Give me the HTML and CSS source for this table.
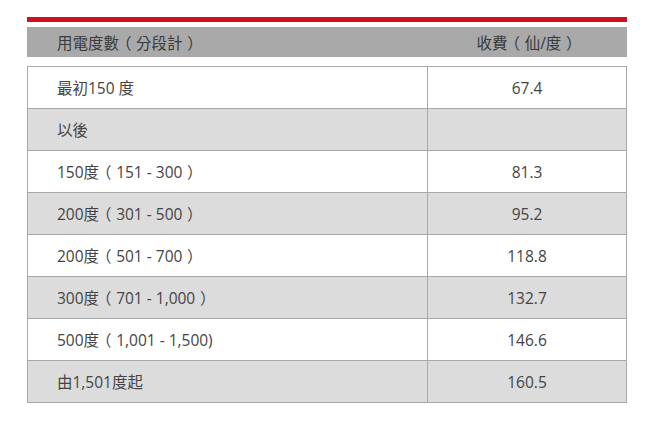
FILE: index.html
```html
<!DOCTYPE html>
<html lang="zh-Hant">
<head>
<meta charset="utf-8">
<title>電費</title>
<link rel="stylesheet" href="styles.css">
</head>
<body>
<div class="tariff">
  <div class="rule"></div>
  <div class="head">
    <div class="head-a">用電度數<span class="pn">（</span>分段計<span class="pn">）</span></div>
    <div class="head-b">收費<span class="pn">（</span>仙/度<span class="pn">）</span></div>
  </div>
  <table class="rates">
    <tr><td class="c-a">最初150 度</td><td class="c-b">67.4</td></tr>
    <tr class="alt"><td class="c-a">以後</td><td class="c-b"></td></tr>
    <tr><td class="c-a">150度<span class="pn">（</span>151 - 300<span class="pn">）</span></td><td class="c-b">81.3</td></tr>
    <tr class="alt"><td class="c-a">200度<span class="pn">（</span>301 - 500<span class="pn">）</span></td><td class="c-b">95.2</td></tr>
    <tr><td class="c-a">200度<span class="pn">（</span>501 - 700<span class="pn">）</span></td><td class="c-b">118.8</td></tr>
    <tr class="alt"><td class="c-a">300度<span class="pn">（</span>701 - 1,000<span class="pn">）</span></td><td class="c-b">132.7</td></tr>
    <tr><td class="c-a">500度<span class="pn">（</span>1,001 - 1,500)</td><td class="c-b">146.6</td></tr>
    <tr class="alt"><td class="c-a">由1,501度起</td><td class="c-b">160.5</td></tr>
  </table>
</div>
</body>
</html>
```
FILE: styles.css
```css
html, body {
  margin: 0;
  padding: 0;
  background: #ffffff;
}
body {
  font-family: "Open Sans", "Noto Sans CJK TC", sans-serif;
  font-size: 15.5px;
  color: #444444;
}
.tariff {
  width: 600px;
  margin: 17px 0 0 27px;
}
.rule {
  height: 5px;
  background: #d0101e;
}
.head {
  margin-top: 5px;
  height: 30px;
  background: #a9a9a9;
  display: flex;
  align-items: center;
  color: #3a3a3a;
}
.head-a {
  flex: 1;
  padding-left: 30px;
}
.head-b {
  width: 199px;
  text-align: center;
}
.pn {
  font-family: "Noto Sans CJK TC", sans-serif;
  font-feature-settings: "halt";
  padding: 0 0.3em;
}
.rates {
  margin-top: 9px;
  width: 600px;
  border-collapse: collapse;
  table-layout: fixed;
}
.rates td {
  border: 1px solid #a8a8a8;
  height: 42px;
  padding: 0;
  box-sizing: border-box;
  vertical-align: middle;
}
.rates .c-a {
  width: 400px;
  padding-left: 29px;
}
.rates .c-b {
  text-align: center;
}
.rates .alt td {
  background: #dcdcdc;
}
```
